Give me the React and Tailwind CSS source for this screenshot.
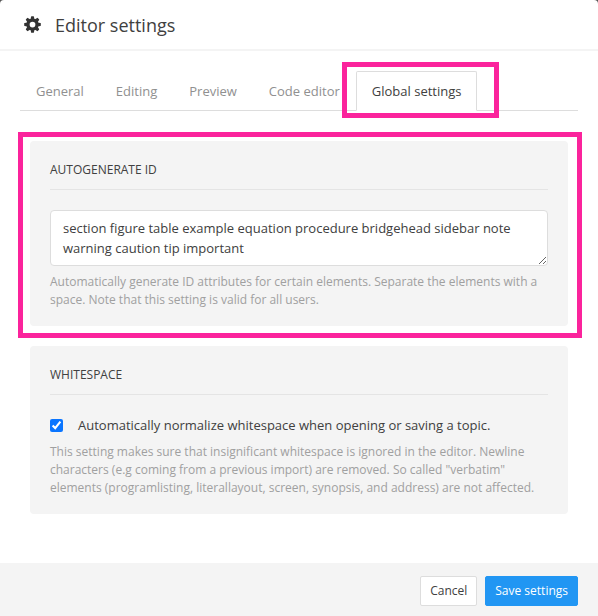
import { useState } from "react";

const tabs = ["General", "Editing", "Preview", "Code editor", "Global settings"];

const GearIcon = ({ className }) => (
  <svg viewBox="0 0 34 34" aria-hidden="true" className={className}>
    <circle cx="17" cy="17" r="9" fill="none" stroke="currentColor" strokeWidth="6.5" />
    {/* Eight teeth, one every 45 degrees */}
    {[0, 45, 90, 135, 180, 225, 270, 315].map((angle) => (
      <path
        key={angle}
        d="M13 7 L14.2 1.2 Q14.4 .4 15.2 .4 H18.8 Q19.6 .4 19.8 1.2 L21 7 Z"
        fill="currentColor"
        transform={`rotate(${angle} 17 17)`}
      />
    ))}
  </svg>
);

const Highlight = ({ className }) => (
  <span
    className={`absolute border-5 border-[#fb239c] pointer-events-none z-10 ${className}`}
  />
);

const SettingsSection = ({ title, highlighted, children }) => (
  <section className="relative bg-[#f4f4f4] rounded px-5 pt-5 pb-[17px]">
    {highlighted && (
      <Highlight className="-left-3 -right-[14px] -top-[9px] -bottom-3" />
    )}
    <h2 className="text-xs leading-[18px] uppercase pb-[10px] mb-5 border-b border-[#e4e4e4]">
      {title}
    </h2>
    {children}
  </section>
);

const HelpText = ({ id, children }) => (
  <p id={id} className="text-xs leading-[18px] text-[#a0a0a0] mt-[7px]">
    {children}
  </p>
);

const App = () => {
  const [activeTab, setActiveTab] = useState("Global settings");
  const [elements, setElements] = useState(
    "section figure table example equation procedure bridgehead sidebar note warning caution tip important"
  );
  const [normalize, setNormalize] = useState(true);

  return (
    <div className="min-h-screen bg-[#555]">
      <div className="min-h-screen flex flex-col bg-white text-[#404040] font-['Open_Sans',sans-serif] rounded-t-sm">
        <header className="flex items-center gap-[14px] px-6 h-[51px] border-b-2 border-[#f4f4f4]">
          <GearIcon className="size-[17px] text-[#333]" />
          <h1 className="text-lg leading-6">Editor settings</h1>
        </header>

        <main className="grow pt-5">
          <div role="tablist" className="flex mx-5 border-b border-[#dddddd]">
            {tabs.map((tab) => {
              const isActive = tab === activeTab;
              return (
                <div key={tab} className="relative">
                  <button
                    role="tab"
                    aria-selected={isActive}
                    onClick={() => setActiveTab(tab)}
                    className={`px-[15px] h-10 -mb-px text-[13px] leading-5 whitespace-nowrap border rounded-t-xs ${
                      isActive
                        ? "bg-white border-[#dddddd] border-b-white"
                        : "border-transparent text-[#909090]"
                    }`}
                  >
                    {tab}
                  </button>
                  {/* Callout around the tab that is being explained */}
                  {tab === "Global settings" && (
                    <Highlight className="-left-[14px] -right-[22px] -top-[9px] -bottom-2" />
                  )}
                </div>
              );
            })}
          </div>

          <div className="flex flex-col gap-5 px-[30px] pt-[30px] pb-12">
            <SettingsSection title="Autogenerate ID" highlighted>
              <textarea
                aria-label="Autogenerate ID"
                aria-describedby="elements-help"
                rows={2}
                value={elements}
                onChange={(e) => setElements(e.target.value)}
                className="block w-full h-14 px-3 py-[7px] text-[13px] leading-5 bg-white border border-[#dddddd] rounded-sm overflow-hidden resize"
              />
              <HelpText id="elements-help">
                Automatically generate ID attributes for certain elements.
                Separate the elements with a space. Note that this setting is
                valid for all users.
              </HelpText>
            </SettingsSection>

            <SettingsSection title="Whitespace">
              <label className="flex items-center gap-[15px] text-[13px] leading-[21px]">
                <input
                  type="checkbox"
                  checked={normalize}
                  onChange={(e) => setNormalize(e.target.checked)}
                  aria-describedby="whitespace-help"
                  className="size-[13px] accent-[#0a75ff]"
                />
                Automatically normalize whitespace when opening or saving a
                topic.
              </label>
              <HelpText id="whitespace-help">
                This setting makes sure that insignificant whitespace is ignored
                in the editor. Newline characters (e.g coming from a previous
                import) are removed. So called "verbatim" elements
                (programlisting, literallayout, screen, synopsis, and address)
                are not affected.
              </HelpText>
            </SettingsSection>
          </div>
        </main>

        <footer className="flex justify-end gap-2 bg-[#f4f4f4] px-5 pt-[13px] pb-[10px] text-xs">
          <button className="h-[30px] px-[9px] bg-white border border-[#dddddd] rounded-xs">
            Cancel
          </button>
          <button className="h-[30px] px-[9px] bg-[#2196f3] border border-[#2196f3] text-white rounded-xs">
            Save settings
          </button>
        </footer>
      </div>
    </div>
  );
};

export default App;
